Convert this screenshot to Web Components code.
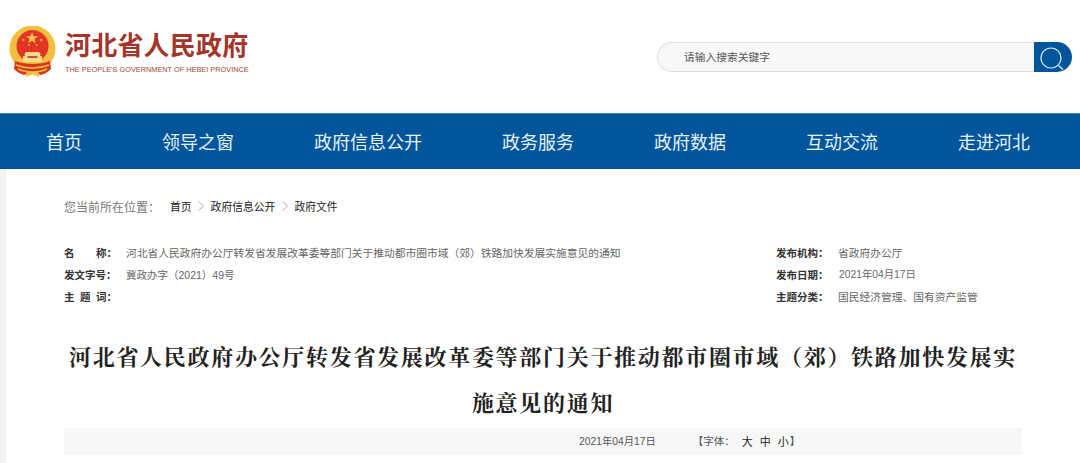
<!DOCTYPE html>
<html lang="zh">
<head>
<meta charset="utf-8">
<title>河北省人民政府</title>
<style>
	html, body { margin: 0; padding: 0; background: #fff; overflow: hidden; }
	body { width: 1080px; height: 463px; font-family: "Liberation Sans", "Noto Sans CJK SC", sans-serif; }
</style>
</head>
<body>
<site-header></site-header>
<main-nav></main-nav>
<article-page>
	<bread-crumbs></bread-crumbs>
	<meta-table></meta-table>
	<article-title>河北省人民政府办公厅转发省发展改革委等部门关于推动都市圈市域（郊）铁路加快发展实施意见的通知</article-title>
	<article-tools></article-tools>
</article-page>

<script>
const cjk = '"Liberation Sans", "Noto Sans CJK SC", sans-serif'

class SiteHeader extends HTMLElement {
	constructor() {
		super()
		this.attachShadow({ mode: 'open' }).innerHTML = `
		<style>
			:host { display: flex; height: 113px; box-sizing: border-box; padding: 26px 8px 0 9px; justify-content: space-between; align-items: flex-start; font-family: ${cjk}; }
			.brand { display: flex; gap: 9px; }
			.names { padding-top: 5px; }
			.cn { font-size: 26px; line-height: 30px; font-weight: 700; color: #a5352a; letter-spacing: .2px; white-space: nowrap; }
			.en { font-size: 7.35px; line-height: 11px; margin-top: 3px; color: #a5452f; white-space: nowrap; }
			.search { display: flex; width: 415px; height: 30px; margin-top: 16px; }
			.box { flex: 1; box-sizing: border-box; border: 1px solid #dedede; border-right: 0; border-radius: 15px 0 0 15px; background: #f8f8f8; font-size: 10.75px; line-height: 28px; padding-left: 26px; color: #555; }
			.btn { width: 38px; height: 30px; background: #03559b; border-radius: 0 15px 15px 0; }
			.btn svg { display: block; }
		</style>
		<div class="brand">
			<svg width="47" height="51" viewBox="0 0 47 51">
				<circle cx="23.500" cy="22.500" r="23" fill="#f3bf3c"/>
				<circle cx="23.500" cy="20" r="16" fill="#e33426"/>
				<path d="M23 6l1.500 4.300h4.500l-3.600 2.700 1.400 4.300-3.800-2.600-3.800 2.600 1.400-4.300-3.600-2.700h4.500z" fill="#f6c542"/>
				<circle cx="14.300" cy="14" r="1.200" fill="#f3b53c"/>
				<circle cx="32.300" cy="14" r="1.200" fill="#f3b53c"/>
				<circle cx="20" cy="19" r="1" fill="#f3b53c"/>
				<circle cx="27.700" cy="19" r="1" fill="#f3b53c"/>
				<path d="M17 26h13l2 3h-1v1h2v6H14v-6h2v-1h-1z" fill="#f6dc8a"/>
				<path d="M18.500 30h10v2h-10z" fill="#c8552c"/>
				<path d="M6 35c5 2 12 3 18 3s12-1 17-3l1 8c-3 3-6 5-10 6l-8.500-3-8.500 3c-4-1-7-3-10-6z" fill="#d5381f"/>
				<path d="M7 39c5 2 11 3 17 3s11-1 16-3M9 43c4 2 9 3 15 3s10-1 14-3" fill="none" stroke="#f3bf3c" stroke-width="1.600"/>
				<path d="M18 45l5.500 2 5.500-2 1.500 6-7-2.500-7 2.500z" fill="#f3bf3c"/>
			</svg>
			<div class="names">
				<div class="cn">河北省人民政府</div>
				<div class="en">THE PEOPLE'S GOVERNMENT OF HEBEI PROVINCE</div>
			</div>
		</div>
		<div class="search">
			<div class="box">请输入搜索关键字</div>
			<div class="btn">
				<svg width="38" height="30" viewBox="0 0 38 30" fill="none" stroke="#d8eef8">
					<circle cx="17" cy="16" r="10" stroke-width="1.200"/>
					<path d="M24.500 23.500l4.500 4" stroke-width="1.500"/>
				</svg>
			</div>
		</div>`
	}
}

class MainNav extends HTMLElement {
	constructor() {
		super()
		const items = ['首页', '领导之窗', '政府信息公开', '政务服务', '政府数据', '互动交流', '走进河北']
		this.attachShadow({ mode: 'open' }).innerHTML = `
		<style>
			:host { display: flex; height: 56px; box-sizing: border-box; border-top: 1px solid #3f86a9; background: #03559b; padding: 3px 50px 0 46px; justify-content: space-between; align-items: center; font: 18px/50px ${cjk}; color: #e4f2fa; }
			span { white-space: nowrap; }
		</style>
		${items.map(i => `<span>${i}</span>`).join('')}`
	}
}

class ArticlePage extends HTMLElement {
	constructor() {
		super()
		this.attachShadow({ mode: 'open' }).innerHTML = `
		<style>
			:host { display: block; height: 294px; box-sizing: border-box; margin-left: 6px; padding: 0 58px; background: #fff; box-shadow: -6px 0 0 #f4f4f4; font-family: ${cjk}; overflow: hidden; }
		</style>
		<slot></slot>`
	}
}

class BreadCrumbs extends HTMLElement {
	constructor() {
		super()
		const chevron = '<svg width="6" height="10" viewBox="0 0 6 10" fill="none" stroke="#aaa"><path d="M.5.5l5 4.500-5 4.500"/></svg>'
		this.attachShadow({ mode: 'open' }).innerHTML = `
		<style>
			:host { display: flex; align-items: center; height: 20px; margin-top: 27px; font-size: 10.800px; color: #222; white-space: nowrap; }
			.where { font-size: 12px; color: #777; margin-right: 10px; }
			svg { margin: 0 6.500px; }
		</style>
		<span class="where">您当前所在位置：</span>
		<span>首页</span>${chevron}<span>政府信息公开</span>${chevron}<span>政府文件</span>`
	}
}

class MetaTable extends HTMLElement {
	constructor() {
		super()
		this.attachShadow({ mode: 'open' }).innerHTML = `
		<style>
			:host { display: grid; grid-template-columns: 62px 650px 62px 1fr; grid-auto-rows: 22px; margin-top: 26px; font-size: 10.750px; line-height: 22px; color: #666; white-space: nowrap; }
			b { font-size: 10.500px; color: #333; font-weight: 700; display: flex; justify-content: space-between; padding-right: 9px; }
			b.r { padding-right: 0; }
			.num { font-size: 10.300px; padding-left: 1px; }
			.doc { font-size: 10.500px; }
		</style>
		<b><span>名</span><span>称：</span></b><span>河北省人民政府办公厅转发省发展改革委等部门关于推动都市圈市域（郊）铁路加快发展实施意见的通知</span>
		<b class="r">发布机构：</b><span>省政府办公厅</span>
		<b>发文字号：</b><span class="doc">冀政办字（2021）49号</span>
		<b class="r">发布日期：</b><span class="num">2021年04月17日</span>
		<b><span>主</span><span>题</span><span>词：</span></b><span></span>
		<b class="r">主题分类：</b><span>国民经济管理、国有资产监管</span>`
	}
}

class ArticleTitle extends HTMLElement {
	constructor() {
		super()
		this.attachShadow({ mode: 'open' }).innerHTML = `
		<style>
			:host { display: block; margin-top: 25px; font: 700 22px/46px "Noto Serif CJK SC", "Liberation Serif", "Noto Sans CJK SC", serif; letter-spacing: 1.700px; color: #222; text-align: center; }
		</style>
		<slot></slot>`
	}
}

class ArticleTools extends HTMLElement {
	constructor() {
		super()
		this.attachShadow({ mode: 'open' }).innerHTML = `
		<style>
			:host { display: flex; height: 27px; margin-top: 3px; box-sizing: border-box; padding: 0 0 2px 515px; background: #f7f7f7; align-items: center; font-size: 10.500px; color: #555; white-space: nowrap; }
			.date { font-size: 10.300px; margin-right: 37px; }
			.size { display: flex; gap: 7px; margin: 0 1px 0 7px; font-size: 11px; color: #222; }
		</style>
		<span class="date">2021年04月17日</span><span>【字体：</span><span class="size"><span>大</span><span>中</span><span>小</span></span><span>】</span>`
	}
}

customElements.define('site-header', SiteHeader)
customElements.define('main-nav', MainNav)
customElements.define('article-page', ArticlePage)
customElements.define('bread-crumbs', BreadCrumbs)
customElements.define('meta-table', MetaTable)
customElements.define('article-title', ArticleTitle)
customElements.define('article-tools', ArticleTools)
</script>
</body>
</html>
